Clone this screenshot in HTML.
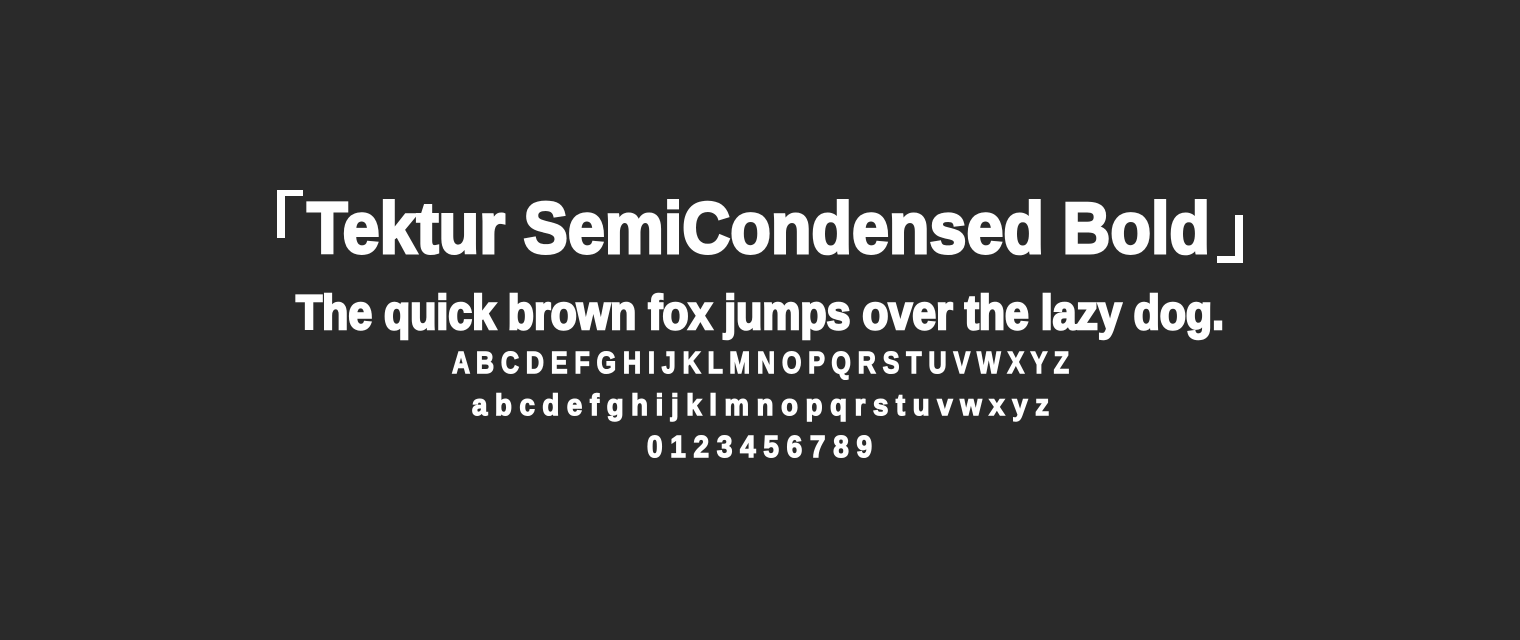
<!DOCTYPE html>
<html><head><meta charset="utf-8"><style>
html,body{margin:0;padding:0;background:#2a2a2a;width:1520px;height:640px;overflow:hidden}
svg{display:block}
text{font-family:"Liberation Sans","Noto Sans CJK JP",sans-serif;font-weight:bold;fill:#fff;stroke:#fff;stroke-linejoin:miter}
</style></head><body>
<svg width="1520" height="640" xmlns="http://www.w3.org/2000/svg">
<rect width="1520" height="640" fill="#2a2a2a"/>
<rect x="277" y="190" width="26" height="6" fill="#fff"/>
<rect x="277" y="190" width="8" height="48" fill="#fff"/>
<rect x="1235" y="215" width="8" height="48" fill="#fff"/>
<rect x="1217" y="256" width="26" height="7" fill="#fff"/>
<text x="307" y="253" font-size="72" stroke-width="3" textLength="903" lengthAdjust="spacingAndGlyphs">Tektur SemiCondensed Bold</text>
<text x="296" y="329" font-size="48" stroke-width="2.5" textLength="928" lengthAdjust="spacingAndGlyphs">The quick brown fox jumps over the lazy dog.</text>
<text x="452" y="373" font-size="31" stroke-width="1.5" textLength="617" lengthAdjust="spacingAndGlyphs">A B C D E F G H I J K L M N O P Q R S T U V W X Y Z</text>
<text x="472" y="415" font-size="30" stroke-width="1.5" textLength="577" lengthAdjust="spacingAndGlyphs">a b c d e f g h i j k l m n o p q r s t u v w x y z</text>
<text x="647" y="457" font-size="31" stroke-width="1.5" textLength="225" lengthAdjust="spacingAndGlyphs">0 1 2 3 4 5 6 7 8 9</text>
</svg>
</body></html>
